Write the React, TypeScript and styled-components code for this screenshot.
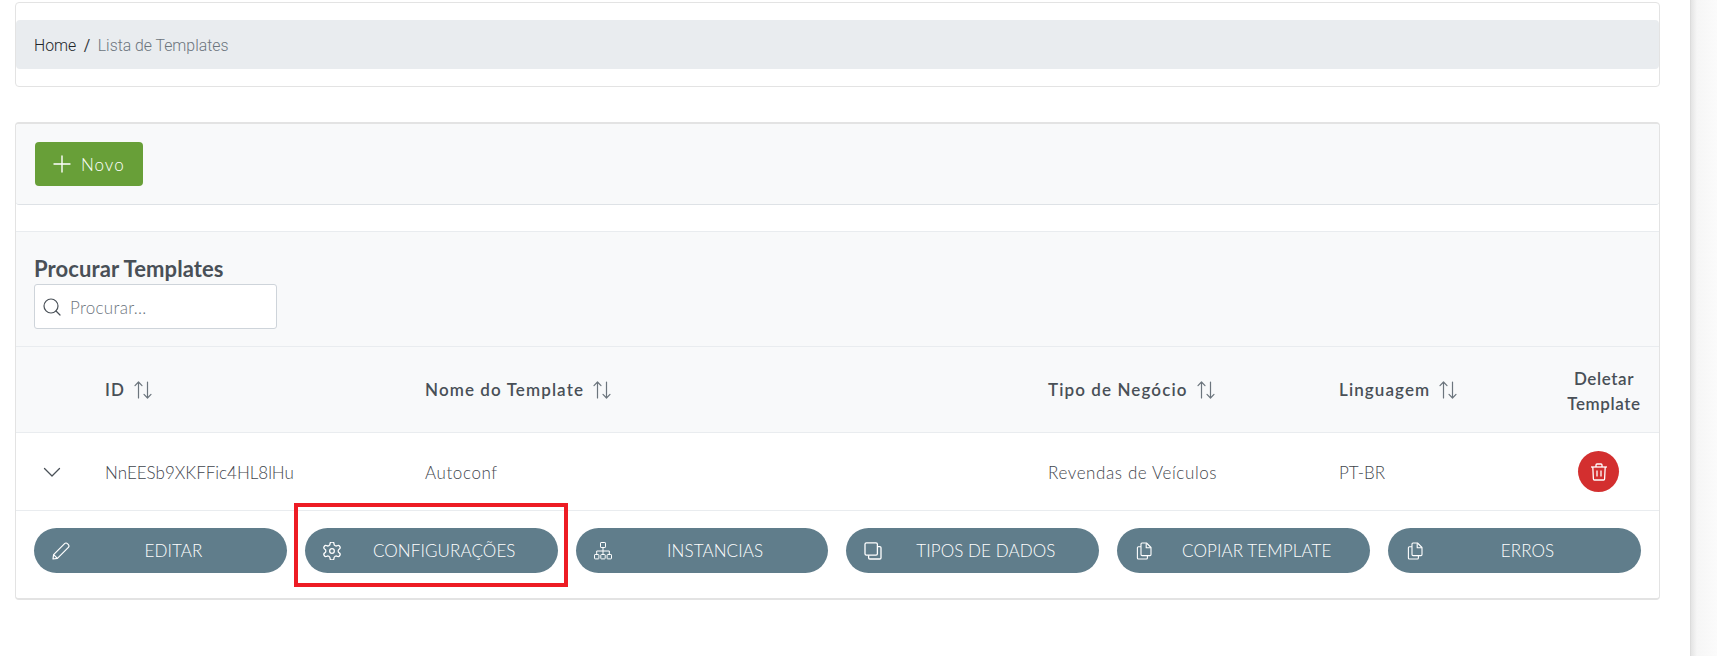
import styled, {createGlobalStyle} from "styled-components";

const GlobalStyle = createGlobalStyle`
  html, body {
    margin: 0;
    padding: 0;
    background: #fff;
  }
  body {
    font-family: "Lato", "Noto Sans", sans-serif;
    overflow: hidden;
  }
`;

const COLUMNS = "89px 320px 623px 291px 207px 1fr";

function PencilIcon() {
  return (
    <svg width="18" height="18" viewBox="0 0 18 18" fill="none" stroke="#fff" strokeWidth="1.2" strokeLinejoin="round">
      <path d="M1 17 L1.6 12.6 L12.6 1.6 C13.4 .8 14.6 .8 15.6 1.8 L16.2 2.4 C17.2 3.4 17.2 4.6 16.4 5.4 L5.4 16.4 Z" />
      <path d="M1.6 12.6 L5.4 16.4" />
    </svg>
  );
}

function GearIcon() {
  return (
    <svg width="18" height="18" viewBox="2 2 20 20" fill="none" stroke="#fff" strokeWidth="1.4" strokeLinecap="round" strokeLinejoin="round">
      <path d="M12.22 2h-.44a2 2 0 0 0-2 2v.18a2 2 0 0 1-1 1.73l-.43.25a2 2 0 0 1-2 0l-.15-.08a2 2 0 0 0-2.73.73l-.22.38a2 2 0 0 0 .73 2.73l.15.1a2 2 0 0 1 1 1.72v.51a2 2 0 0 1-1 1.74l-.15.09a2 2 0 0 0-.73 2.73l.22.38a2 2 0 0 0 2.73.73l.15-.08a2 2 0 0 1 2 0l.43.25a2 2 0 0 1 1 1.73V20a2 2 0 0 0 2 2h.44a2 2 0 0 0 2-2v-.18a2 2 0 0 1 1-1.73l.43-.25a2 2 0 0 1 2 0l.15.08a2 2 0 0 0 2.73-.73l.22-.39a2 2 0 0 0-.73-2.73l-.15-.08a2 2 0 0 1-1-1.74v-.5a2 2 0 0 1 1-1.74l.15-.09a2 2 0 0 0 .73-2.73l-.22-.38a2 2 0 0 0-2.73-.73l-.15.08a2 2 0 0 1-2 0l-.43-.25a2 2 0 0 1-1-1.73V4a2 2 0 0 0-2-2z" />
      <circle cx="12" cy="12" r="2.6" />
    </svg>
  );
}

function SitemapIcon() {
  return (
    <svg width="18" height="18" viewBox="0 0 18 18" fill="none" stroke="#fff" strokeWidth="1">
      <rect x="6.5" y=".5" width="5" height="5" rx=".6" />
      <rect x=".5" y="12.5" width="4.4" height="4.4" rx=".6" />
      <rect x="6.8" y="12.5" width="4.4" height="4.4" rx=".6" />
      <rect x="13.1" y="12.5" width="4.4" height="4.4" rx=".6" />
      <path d="M9 5.5 V12.5 M2.7 12.5 V9 H15.3 V12.5" />
    </svg>
  );
}

function CloneIcon() {
  return (
    <svg width="18" height="18" viewBox="0 0 18 18" fill="none" stroke="#fff" strokeWidth="1.3" strokeLinejoin="round">
      <rect x="1" y=".8" width="12.4" height="12.4" rx="1.4" />
      <path d="M13.4 4.6 H15.8 C16.5 4.6 17 5.1 17 5.8 V15.8 C17 16.5 16.5 17 15.8 17 H5.8 C5.1 17 4.6 16.5 4.6 15.8 V13.2" />
    </svg>
  );
}

function CopyIcon() {
  return (
    <svg width="18" height="18" viewBox="0 0 18 18" fill="none" stroke="#fff" strokeWidth="1.1" strokeLinejoin="round">
      <path d="M7 1 H11.5 L16 5.5 V12.6 C16 13.2 15.6 13.6 15 13.6 H7 C6.4 13.6 6 13.2 6 12.6 V2 C6 1.4 6.4 1 7 1 Z" />
      <path d="M11.2 1.2 V5.8 H16" />
      <path d="M6 4.8 H3.4 C2.8 4.8 2.4 5.2 2.4 5.8 V16 C2.4 16.6 2.8 17 3.4 17 H11.4 C12 17 12.4 16.6 12.4 16 V13.6" />
    </svg>
  );
}

function TrashIcon() {
  return (
    <svg width="18" height="18" viewBox="0 0 18 18" fill="none" stroke="#fff" strokeWidth="1.3" strokeLinejoin="round">
      <path d="M1 4 H17" />
      <path d="M6 4 V2 C6 1.4 6.4 1 7 1 H11 C11.6 1 12 1.4 12 2 V4" />
      <path d="M2.8 4 L3.4 16 C3.4 16.6 3.9 17 4.4 17 H13.6 C14.1 17 14.6 16.6 14.6 16 L15.2 4" />
      <path d="M7 7.6 V13.4 M11 7.6 V13.4" />
    </svg>
  );
}

function SortIcon() {
  return (
    <svg width="18" height="18" viewBox="0 0 18 18" fill="none" stroke="#6c757d" strokeWidth="1.2" strokeLinecap="round" strokeLinejoin="round">
      <path d="M4.5 17 V1 M1 4.6 L4.5 1 L8 4.6" />
      <path d="M13.5 1 V17 M10 13.4 L13.5 17 L17 13.4" />
    </svg>
  );
}

function ChevronIcon() {
  return (
    <svg width="18" height="18" viewBox="0 0 18 18" fill="none" stroke="#495057" strokeWidth="1.3" strokeLinecap="round" strokeLinejoin="round">
      <path d="M1.5 5.5 L9 13 L16.5 5.5" />
    </svg>
  );
}

function PlusIcon() {
  return (
    <svg width="18" height="18" viewBox="0 0 18 18" fill="none" stroke="#fff" strokeWidth="1.4" strokeLinecap="round">
      <path d="M9 1 V17 M1 9 H17" />
    </svg>
  );
}

function SearchIcon() {
  return (
    <svg width="18" height="18" viewBox="0 0 18 18" fill="none" stroke="#495057" strokeWidth="1.2" strokeLinecap="round">
      <circle cx="8" cy="8" r="7" />
      <path d="M13 13 L17 17" />
    </svg>
  );
}

const ACTIONS = [
  {label: "EDITAR", icon: <PencilIcon />},
  {label: "CONFIGURAÇÕES", icon: <GearIcon />, marked: true},
  {label: "INSTANCIAS", icon: <SitemapIcon />},
  {label: "TIPOS DE DADOS", icon: <CloneIcon />},
  {label: "COPIAR TEMPLATE", icon: <CopyIcon />},
  {label: "ERROS", icon: <CopyIcon />},
];

export default function App() {
  return (
    <Page>
      <GlobalStyle />
      <Content>
        <BreadcrumbCard>
          <Breadcrumb>
            <Crumb>Home</Crumb>
            <Slash>/</Slash>
            <CurrentCrumb>Lista de Templates</CurrentCrumb>
          </Breadcrumb>
        </BreadcrumbCard>

        <MainCard>
          <Toolbar>
            <NewButton>
              <PlusIcon />
              Novo
            </NewButton>
          </Toolbar>

          <SearchHeader>
            <SearchTitle>Procurar Templates</SearchTitle>
            <SearchBox>
              <SearchIcon />
              <SearchInput placeholder="Procurar..." />
            </SearchBox>
          </SearchHeader>

          <HeadRow>
            <span />
            <HeadCell>ID <SortIcon /></HeadCell>
            <HeadCell>Nome do Template <SortIcon /></HeadCell>
            <HeadCell>Tipo de Negócio <SortIcon /></HeadCell>
            <HeadCell>Linguagem <SortIcon /></HeadCell>
            <DeleteHead>Deletar Template</DeleteHead>
          </HeadRow>

          <BodyRow>
            <ChevronCell>
              <ChevronIcon />
            </ChevronCell>
            <BodyCell>NnEESb9XKFFic4HL8lHu</BodyCell>
            <BodyCell $spaced>Autoconf</BodyCell>
            <BodyCell $spaced>Revendas de Veículos</BodyCell>
            <BodyCell>PT-BR</BodyCell>
            <DeleteCell>
              <DeleteButton>
                <TrashIcon />
              </DeleteButton>
            </DeleteCell>
          </BodyRow>

          <Actions>
            {ACTIONS.map((action) => (
              <ActionButton key={action.label}>
                {action.icon}
                <ActionLabel>{action.label}</ActionLabel>
                {action.marked && <Highlight />}
              </ActionButton>
            ))}
          </Actions>
        </MainCard>
      </Content>
      <SidePanel />
    </Page>
  );
}

const Page = styled.div`
  display: flex;
  width: 1717px;
  height: 656px;
  overflow: hidden;
  background: #fff;
`;

const Content = styled.main`
  flex: 1;
  min-width: 0;
  padding: 2px 30px 0 15px;
  box-sizing: border-box;
`;

const SidePanel = styled.aside`
  width: 27px;
  background: linear-gradient(90deg, #e4e4e4 0, #f6f6f6 6px, #fbfbfb 100%);
  border-left: 1px solid #dcdcdc;
  box-sizing: border-box;
`;

const BreadcrumbCard = styled.section`
  width: 1645px;
  height: 85px;
  box-sizing: border-box;
  padding-top: 17px;
  border: 1px solid #e3e3e3;
  border-radius: 4px;
  background: #fff;
`;

const Breadcrumb = styled.nav`
  display: flex;
  align-items: center;
  height: 49px;
  padding: 1px 0 0 18px;
  box-sizing: border-box;
  background: #e9ecef;
  border-radius: 4px;
  font-family: "Roboto", "Liberation Sans", sans-serif;
  font-size: 15.8px;
  font-weight: 300;
`;

const Crumb = styled.span`
  color: #212529;
`;

const Slash = styled.span`
  margin: 0 7.5px;
  color: #343a40;
  font-weight: 400;
`;

const CurrentCrumb = styled.span`
  color: #6c757d;
`;

const MainCard = styled.section`
  width: 1645px;
  height: 478px;
  margin-top: 35px;
  box-sizing: border-box;
  border: 1px solid #e3e3e3;
  border-top-width: 2px;
  border-bottom-width: 2px;
  border-radius: 4px;
  background: #fff;
`;

const Toolbar = styled.div`
  height: 81px;
  box-sizing: border-box;
  padding: 18px 19px;
  background: #f8f9fa;
  border-bottom: 1px solid #dee2e6;
  border-radius: 3px;
`;

const NewButton = styled.button`
  display: flex;
  align-items: center;
  gap: 10px;
  width: 108px;
  height: 44px;
  padding: 0 0 0 18px;
  border: none;
  border-radius: 4px;
  background: #689f38;
  color: #fff;
  font-family: inherit;
  font-size: 17px;
  font-weight: 300;
  letter-spacing: 1px;
`;

const SearchHeader = styled.div`
  height: 116px;
  margin-top: 26px;
  box-sizing: border-box;
  padding: 20px 18px 0;
  background: #f8f9fa;
  border-top: 1px solid #e9ecef;
  border-bottom: 1px solid #e9ecef;
`;

const SearchTitle = styled.h2`
  margin: 0;
  height: 32px;
  line-height: 33px;
  font-size: 22px;
  font-weight: 700;
  letter-spacing: 0.1px;
  color: #495057;
`;

const SearchBox = styled.label`
  display: flex;
  align-items: center;
  gap: 9px;
  width: 243px;
  height: 45px;
  box-sizing: border-box;
  padding-left: 8px;
  background: #fff;
  border: 1px solid #ced4da;
  border-radius: 3px;
`;

const SearchInput = styled.input`
  flex: 1;
  min-width: 0;
  border: none;
  outline: none;
  background: transparent;
  font-family: inherit;
  font-size: 17px;
  font-weight: 300;
  letter-spacing: 0.3px;
  padding: 1px 0 0;

  &::placeholder {
    color: #6c757d;
    opacity: 1;
  }
`;

const HeadRow = styled.div`
  display: grid;
  grid-template-columns: ${COLUMNS};
  align-items: center;
  height: 86px;
  box-sizing: border-box;
  background: #f8f9fa;
  border-bottom: 1px solid #e9ecef;
`;

const HeadCell = styled.div`
  display: flex;
  align-items: center;
  gap: 9px;
  font-size: 17px;
  font-weight: 600;
  color: #495057;
  letter-spacing: 1.1px;
`;

const DeleteHead = styled.div`
  width: 84px;
  margin: 2px 0 0 16px;
  text-align: center;
  font-size: 17px;
  line-height: 25px;
  font-weight: 600;
  color: #495057;
  letter-spacing: 0.6px;
`;

const BodyRow = styled.div`
  display: grid;
  grid-template-columns: ${COLUMNS};
  align-items: center;
  height: 78px;
  box-sizing: border-box;
  border-bottom: 1px solid #e9ecef;
`;

const ChevronCell = styled.div`
  display: flex;
  padding-left: 27px;
`;

const BodyCell = styled.div<{$spaced?: boolean}>`
  padding-top: 2px;
  font-size: 17px;
  font-weight: 300;
  color: #3f464d;
  letter-spacing: ${(props) => (props.$spaced ? "0.6px" : "0")};
`;

const DeleteCell = styled.div`
  display: flex;
  padding-left: 32px;
`;

const DeleteButton = styled.button`
  display: flex;
  align-items: center;
  justify-content: center;
  width: 41px;
  height: 41px;
  padding: 0;
  border: none;
  border-radius: 50%;
  background: #d32f2f;
`;

const Actions = styled.div`
  display: grid;
  grid-template-columns: repeat(6, 1fr);
  gap: 18px;
  padding: 17px 18px 0 18px;
`;

const ActionButton = styled.button`
  position: relative;
  display: flex;
  align-items: center;
  height: 45px;
  padding: 0 10px 0 18px;
  border: none;
  border-radius: 23px;
  background: #607d8b;
  color: #fff;
  font-family: inherit;
  font-size: 17px;
  font-weight: 300;
  letter-spacing: 0.1px;
`;

const ActionLabel = styled.span`
  flex: 1;
  text-align: center;
`;

const Highlight = styled.span`
  position: absolute;
  top: -25px;
  right: -10px;
  bottom: -14px;
  left: -11px;
  border: 4px solid #ed1c24;
  pointer-events: none;
`;
